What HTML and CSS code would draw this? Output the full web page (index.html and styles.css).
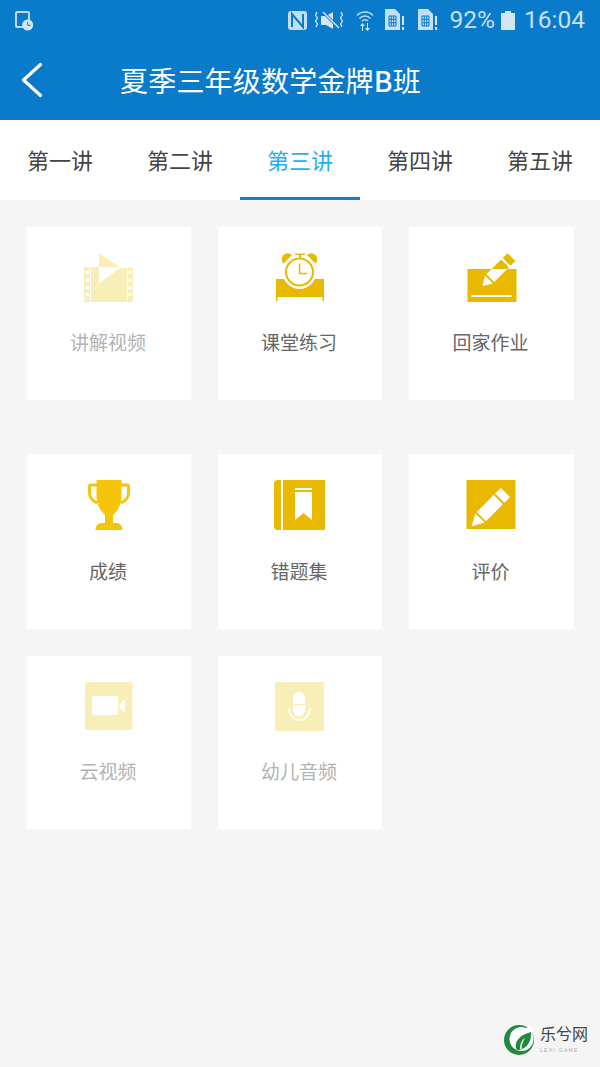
FILE: index.html
```html
<!DOCTYPE html>
<html lang="zh">
<head>
<meta charset="utf-8">
<title>夏季三年级数学金牌B班</title>
<link rel="stylesheet" href="styles.css">
</head>
<body>
<div class="page">
  <header class="top">
    <div class="status">
      <svg class="st st-left" viewBox="14 10 20 21">
        <path d="M24 27H17a1 1 0 0 1-1-1V13a1 1 0 0 1 1-1h11a1 1 0 0 1 1 1v8" fill="none" stroke="#bcd9f1" stroke-width="2"/>
        <circle cx="27.700" cy="25" r="5.500" fill="#d3e6f6"/>
        <path d="M27.700 22v3.300h3" fill="none" stroke="#0a7acb" stroke-width="1"/>
      </svg>
      <div class="st-right">
        <svg class="st st-nfc" viewBox="288 11 19 19">
          <rect x="288" y="11" width="19" height="19" rx="3" fill="#c5def3"/>
          <path d="M292 27V14l11 13V14" fill="none" stroke="#0a7acb" stroke-width="2"/>
        </svg>
        <svg class="st st-mute" viewBox="315 11 29 19">
          <path d="M321 16h5l7-4v17l-7-4h-5z" fill="#d3e6f6"/>
          <path d="M322 11l17 17" stroke="#0a7acb" stroke-width="3"/>
          <path d="M323 12l16 16" stroke="#d3e6f6" stroke-width="1.500"/>
          <path d="M317 12l-1.500 3 2 3-2 3 2 3-1.500 3M341 12l1.500 3-2 3 2 3-2 3 1.500 3" fill="none" stroke="#d3e6f6" stroke-width="1.300"/>
        </svg>
        <svg class="st st-wifi" viewBox="356 9 18 22">
          <path d="M357 15.500a11 11 0 0 1 16 0M359.500 18.500a7.500 7.500 0 0 1 11 0M362 21a4 4 0 0 1 6 0" fill="none" stroke="#bcd9f1" stroke-width="1.500"/>
          <path d="M362 31v-5h-2l2.500-3 2.500 3h-2v5zM367 23v5h-2l2.500 3 2.500-3h-2v-5z" fill="#d3e6f6"/>
        </svg>
        <svg class="st st-sim" viewBox="385 9 20 22">
          <path d="M385 9h10l5 5v16h-15z" fill="#c5def3"/>
          <path d="M389 16h7v10h-7zM391.300 16v10M393.700 16v10M389 19.300h7M389 22.700h7" fill="none" stroke="#0a7acb" stroke-width="1"/>
          <path d="M402 16h2v9h-2zM402 27h2v3h-2z" fill="#d3e6f6"/>
        </svg>
        <svg class="st st-sim st-sim2" viewBox="385 9 20 22">
          <path d="M385 9h10l5 5v16h-15z" fill="#c5def3"/>
          <path d="M389 16h7v10h-7zM391.300 16v10M393.700 16v10M389 19.300h7M389 22.700h7" fill="none" stroke="#0a7acb" stroke-width="1"/>
          <path d="M402 16h2v9h-2zM402 27h2v3h-2z" fill="#d3e6f6"/>
        </svg>
        <span class="st-text st-pct">92%</span>
        <svg class="st st-batt" viewBox="501 11 14 19">
          <path d="M505 11h6v2h4v17h-14V13h4z" fill="#d3e6f6"/>
        </svg>
        <span class="st-text st-time">16:04</span>
      </div>
    </div>
    <div class="nav">
      <svg class="back" viewBox="20 61 24 38">
        <path d="M40.500 64.500L23.500 80l17 15.500" fill="none" stroke="#fff" stroke-width="3.200" stroke-linecap="round" stroke-linejoin="round"/>
      </svg>
      <h1 class="title">夏季三年级数学金牌<b>B</b>班</h1>
    </div>
  </header>

  <nav class="tabs">
    <a class="tab">第一讲</a>
    <a class="tab">第二讲</a>
    <a class="tab tab-on">第三讲</a>
    <a class="tab">第四讲</a>
    <a class="tab">第五讲</a>
  </nav>

  <main class="content">
    <section class="row row-a">
      <div class="card off">
        <svg class="ico" viewBox="79 253 60 52">
          <path d="M99 253l21 14H99z" fill="#f8efb8"/>
          <path d="M84 267h15v16l21-15h13v34H84z" fill="#f8efb8"/>
          <path d="M99 268h21l-21 15z" fill="#fff"/>
          <path d="M90.500 267v34M127.500 267v34" stroke="#fff" stroke-width="1"/>
          <path d="M86 271h3v3h-3zM86 279h3v3h-3zM86 286h3v3h-3zM86 293h3v3h-3zM128.500 271h3v3h-3zM128.500 279h3v3h-3zM128.500 286h3v3h-3zM128.500 293h3v3h-3z" fill="#fff"/>
        </svg>
        <span class="label">讲解视频</span>
      </div>
      <div class="card">
        <svg class="ico" viewBox="270 253 60 52">
          <path d="M276 279h48v22h-1.500v-4h-45v4H276z" fill="#e8b900"/>
          <circle cx="299.500" cy="272" r="17" fill="#fff"/>
          <circle cx="299.500" cy="272" r="13.500" fill="#fff" stroke="#e8b900" stroke-width="2"/>
          <path d="M299.500 263.500v10h7.500" fill="none" stroke="#e8b900" stroke-width="1.500"/>
          <path d="M295 253.500h10v1.500h-4v3h-2v-3h-4z" fill="#e8b900"/>
          <path d="M283.500 263.500a5.500 5.500 0 0 1 8.500-8.500zM315.500 263.500a5.500 5.500 0 0 0-8.500-8.500z" fill="#e8b900"/>
        </svg>
        <span class="label">课堂练习</span>
      </div>
      <div class="card">
        <svg class="ico" viewBox="461.500 253 60 52">
          <defs>
            <clipPath id="in-box"><rect x="467" y="269" width="49" height="33"/></clipPath>
          </defs>
          <rect x="467" y="269" width="49" height="33" fill="#e8b900"/>
          <rect x="471" y="295" width="40" height="2" fill="#fff"/>
          <g transform="translate(482 286) rotate(-45)">
            <path d="M0 0l9-5.500v11z" fill="#e8b900"/>
            <rect x="11" y="-5.500" width="21" height="11" fill="#e8b900"/>
            <rect x="34" y="-5.500" width="7" height="11" fill="#e8b900"/>
          </g>
          <g clip-path="url(#in-box)">
            <g transform="translate(482 286) rotate(-45)">
              <path d="M0 0l9-5.500v11z" fill="#fff"/>
              <rect x="11" y="-5.500" width="21" height="11" fill="#fff"/>
            </g>
          </g>
        </svg>
        <span class="label">回家作业</span>
      </div>
    </section>

    <section class="row row-b">
      <div class="card">
        <svg class="ico" viewBox="79 480 60 52">
          <path d="M97 485h-6a1.500 1.500 0 0 0-1.500 1.500V493c0 5 3.500 8 7.500 10M121 485h6a1.500 1.500 0 0 1 1.500 1.500V493c0 5-3.500 8-7.500 10" fill="none" stroke="#f4c50a" stroke-width="3"/>
          <path d="M96.500 480h25v17c0 10-6.500 16-8.500 18v8h4c3 0 5.500 3 5.500 7h-27c0-4 2.500-7 5.500-7h4v-8c-2-2-8.500-8-8.500-18z" fill="#f4c50a"/>
        </svg>
        <span class="label">成绩</span>
      </div>
      <div class="card">
        <svg class="ico" viewBox="270 480 60 52">
          <path d="M281 480v50h-3a4 4 0 0 1-4-4v-42a4 4 0 0 1 4-4z" fill="#e8b900"/>
          <rect x="283" y="480" width="42" height="50" fill="#e8b900"/>
          <rect x="295" y="488" width="17" height="2" fill="#fff"/>
          <path d="M295 492h17v28l-8.500-7-8.500 7z" fill="#fff"/>
        </svg>
        <span class="label">错题集</span>
      </div>
      <div class="card">
        <svg class="ico" viewBox="461.500 480 60 52">
          <rect x="466" y="480" width="49" height="49" fill="#e8b900"/>
          <g transform="translate(471 526.500) rotate(-45)">
            <path d="M0 0l12-6.500v13z" fill="#fff"/>
            <rect x="14" y="-6.500" width="24" height="13" fill="#fff"/>
            <rect x="40" y="-6.500" width="8" height="13" fill="#fff"/>
          </g>
        </svg>
        <span class="label">评价</span>
      </div>
    </section>

    <section class="row row-c">
      <div class="card off">
        <svg class="ico" viewBox="79 682 60 52">
          <rect x="85" y="682" width="47.500" height="48" rx="2" fill="#f8efb8"/>
          <rect x="92" y="696" width="26" height="19" rx="2" fill="#fff"/>
          <path d="M125 700v12c-3 0-5-3-6-5.500 1-3 3-6.500 6-6.500z" fill="#fff"/>
        </svg>
        <span class="label">云视频</span>
      </div>
      <div class="card off">
        <svg class="ico" viewBox="270 682 60 52">
          <rect x="275" y="682" width="49" height="49" fill="#f8efb8"/>
          <path d="M293 704v-6a6 6 0 0 1 12 0v6z" fill="#fff"/>
          <path d="M293 705h12v5a6 6 0 0 1-12 0z" fill="#fff"/>
          <path d="M289 708a10.500 12 0 0 0 21 0" fill="none" stroke="#fff" stroke-width="1.500"/>
        </svg>
        <span class="label">幼儿音频</span>
      </div>
    </section>
  </main>

  <aside class="mark">
    <svg class="mark-logo" viewBox="504 1025 32 32">
      <circle cx="519" cy="1040" r="15" fill="#1f8a3c"/>
      <circle cx="521.500" cy="1039" r="12" fill="#fff"/>
      <path d="M529 1025l6 4-5 6-5-5z" fill="#fff"/>
      <path d="M531 1032c1 10-5 18-14 18-4-6 1-15 14-18z" fill="#1f8a3c"/>
      <path d="M525 1038c-3 2-5 6-5 11h1.500c0-4 1.500-8 3.500-11z" fill="#fff"/>
    </svg>
    <div class="mark-text">
      <span class="mark-name">乐兮网</span>
      <span class="mark-sub">LEXI GAME</span>
    </div>
  </aside>
</div>
</body>
</html>
```

FILE: styles.css
```css
* { box-sizing: border-box; }
html, body { margin: 0; padding: 0; }
body {
  background: #f5f5f5;
  font-family: "Noto Sans CJK SC", "Noto Sans", Roboto, sans-serif;
}
.page {
  position: relative;
  width: 600px;
  height: 1067px;
  overflow: hidden;
  display: flex;
  flex-direction: column;
}
.top { background: #0a7acb; height: 120px; flex: none; }
.status {
  height: 40px;
  display: flex;
  align-items: center;
  justify-content: space-between;
  padding: 0 15px 0 14px;
}
.st { display: block; flex: none; }
.st-left { width: 20px; height: 21px; }
.st-right { display: flex; align-items: center; }
.st-nfc { width: 19px; height: 19px; }
.st-mute { width: 29px; height: 19px; margin-left: 8px; }
.st-wifi { width: 18px; height: 22px; margin-left: 12px; }
.st-sim { width: 20px; height: 22px; margin-left: 11px; }
.st-sim2 { margin-left: 13px; }
.st-text {
  font-family: Roboto, sans-serif;
  font-size: 24.500px;
  line-height: 40px;
  color: #c9e0f4;
}
.st-pct { margin-left: 12px; }
.st-batt { width: 14px; height: 19px; margin-left: 6px; }
.st-time { margin-left: 9px; }

.nav {
  height: 80px;
  display: flex;
  align-items: center;
  padding-left: 20px;
}
.back { width: 24px; height: 38px; flex: none; }
.title {
  margin: 0 0 0 76px;
  font-size: 28px;
  font-weight: 400;
  line-height: 80px;
  letter-spacing: 0.200px;
  color: #fff;
  white-space: nowrap;
}
.title b { font-weight: 500; }

.tabs {
  height: 80px;
  flex: none;
  display: flex;
  background: #fff;
}
.tab {
  width: 120px;
  height: 80px;
  display: flex;
  align-items: center;
  justify-content: center;
  padding-bottom: 2px;
  font-size: 22px;
  color: #444;
}
.tab-on {
  color: #1fb0f2;
  border-bottom: 3px solid #0f7fd2;
  padding-top: 1px;
  padding-bottom: 0;
}

.content {
  flex: 1;
  background: #f5f5f5;
  padding: 27px 0 0 27px;
}
.row {
  display: grid;
  grid-template-columns: 164px 164px 165px;
  column-gap: 27px;
}
.row-a { height: 173px; margin-bottom: 54px; }
.row-b { height: 175px; margin-bottom: 27px; }
.row-c { height: 173px; }
.card {
  background: #fff;
  display: flex;
  flex-direction: column;
  align-items: center;
  padding-top: 26px;
}
.ico { display: block; width: 60px; height: 52px; flex: none; }
.label {
  margin-top: 23px;
  padding-right: 2px;
  font-size: 19px;
  line-height: 28px;
  color: #666;
}
.row-b .label { margin-top: 25px; }
.off .label { color: #b3b3b3; }

.mark {
  position: absolute;
  left: 504px;
  top: 1025px;
  display: flex;
  align-items: flex-start;
  column-gap: 4px;
}
.mark-logo { display: block; width: 32px; height: 32px; }
.mark-text { display: flex; flex-direction: column; }
.mark-name {
  font-size: 16px;
  line-height: 16px;
  color: #444;
}
.mark-sub {
  margin-top: 6px;
  font-family: "Liberation Sans", sans-serif;
  font-size: 5px;
  line-height: 6px;
  letter-spacing: 1.300px;
  color: #aaa;
  white-space: nowrap;
}
```
